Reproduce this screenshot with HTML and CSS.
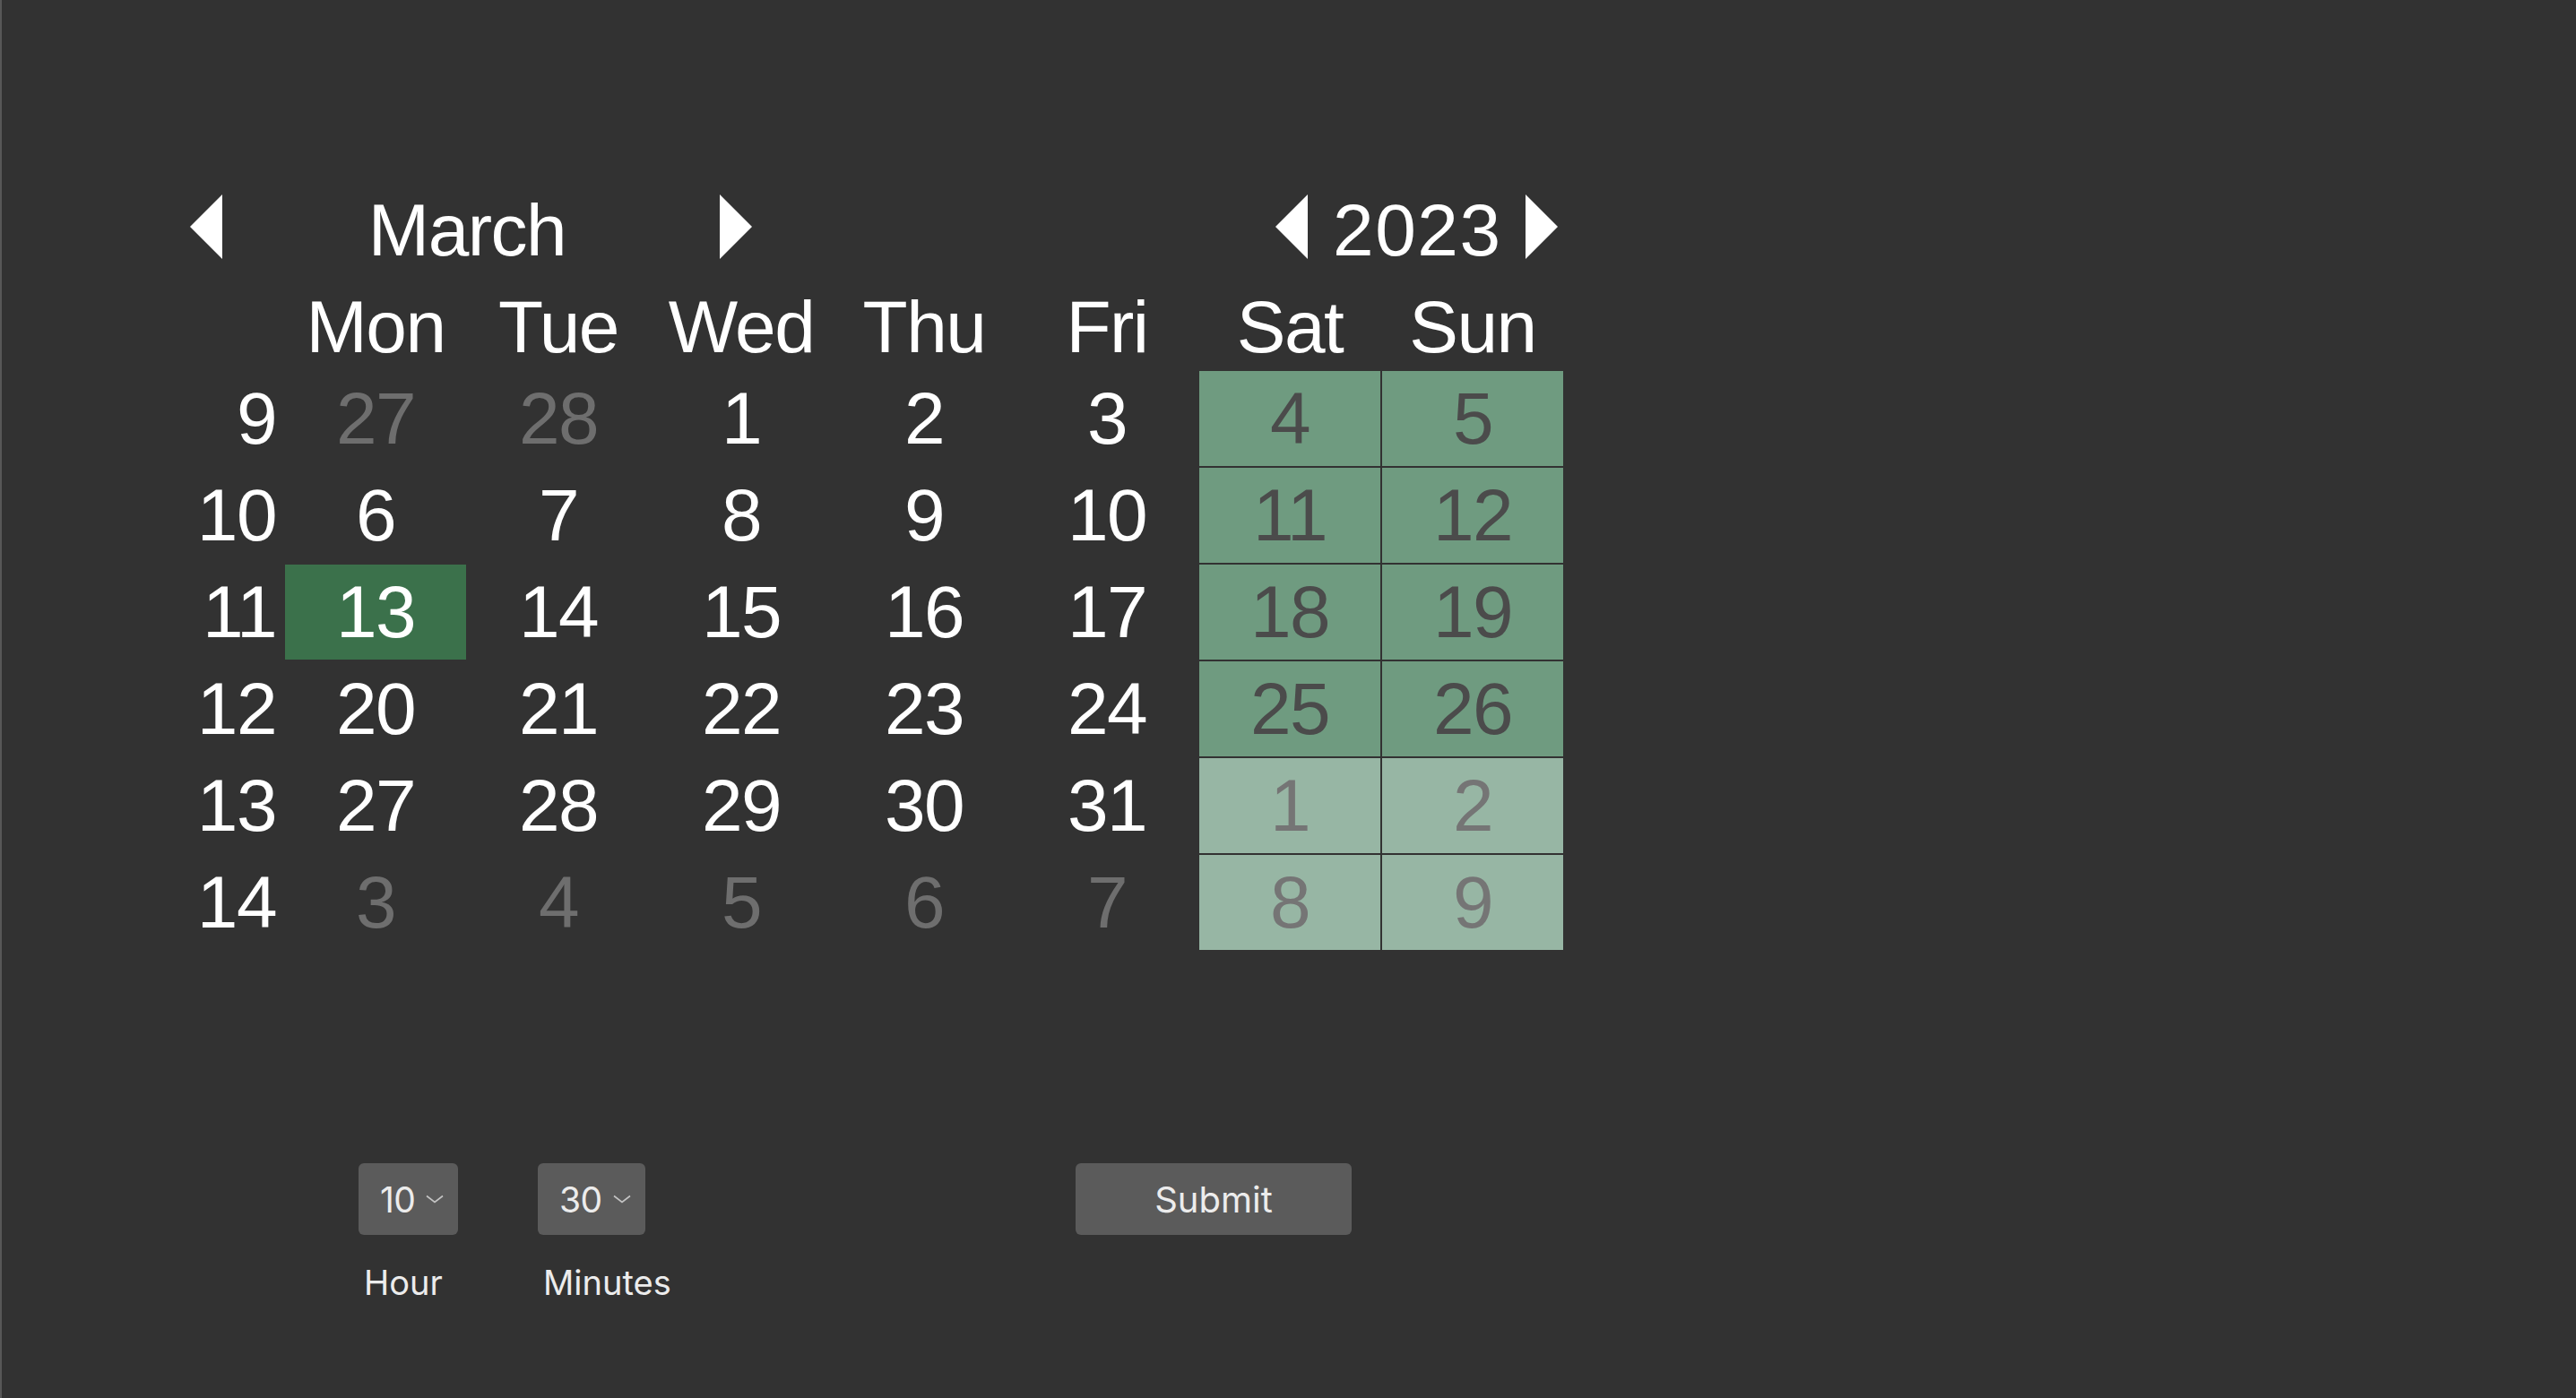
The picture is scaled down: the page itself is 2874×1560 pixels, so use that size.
FILE: index.html
```html
<!DOCTYPE html>
<html lang="en">
<head>
<meta charset="utf-8">
<title>Calendar</title>
<link rel="stylesheet" href="styles.css">
</head>
<body>
<div class="app">
  <div class="calendar">
    <div class="nav nav-prev"><svg width="36" height="72" viewBox="0 0 36 72"><polygon points="36,0 36,72 0,36" fill="#fff"/></svg></div>
    <div class="month">March</div>
    <div class="nav nav-next"><svg width="36" height="72" viewBox="0 0 36 72"><polygon points="0,0 0,72 36,36" fill="#fff"/></svg></div>
    <div class="year-nav">
      <svg width="36" height="72" viewBox="0 0 36 72"><polygon points="36,0 36,72 0,36" fill="#fff"/></svg>
      <span class="year">2023</span>
      <svg width="36" height="72" viewBox="0 0 36 72"><polygon points="0,0 0,72 36,36" fill="#fff"/></svg>
    </div>

    <div class="cell corner"></div>
    <div class="cell dow">Mon</div>
    <div class="cell dow">Tue</div>
    <div class="cell dow">Wed</div>
    <div class="cell dow">Thu</div>
    <div class="cell dow">Fri</div>
    <div class="cell dow">Sat</div>
    <div class="cell dow">Sun</div>

    <div class="cell week">9</div>
    <div class="cell muted">27</div>
    <div class="cell muted">28</div>
    <div class="cell">1</div>
    <div class="cell">2</div>
    <div class="cell">3</div>
    <div class="cell weekend">4</div>
    <div class="cell weekend">5</div>

    <div class="cell week">10</div>
    <div class="cell">6</div>
    <div class="cell">7</div>
    <div class="cell">8</div>
    <div class="cell">9</div>
    <div class="cell">10</div>
    <div class="cell weekend">11</div>
    <div class="cell weekend">12</div>

    <div class="cell week">11</div>
    <div class="cell today">13</div>
    <div class="cell">14</div>
    <div class="cell">15</div>
    <div class="cell">16</div>
    <div class="cell">17</div>
    <div class="cell weekend">18</div>
    <div class="cell weekend">19</div>

    <div class="cell week">12</div>
    <div class="cell">20</div>
    <div class="cell">21</div>
    <div class="cell">22</div>
    <div class="cell">23</div>
    <div class="cell">24</div>
    <div class="cell weekend">25</div>
    <div class="cell weekend">26</div>

    <div class="cell week">13</div>
    <div class="cell">27</div>
    <div class="cell">28</div>
    <div class="cell">29</div>
    <div class="cell">30</div>
    <div class="cell">31</div>
    <div class="cell weekend next">1</div>
    <div class="cell weekend next">2</div>

    <div class="cell week">14</div>
    <div class="cell muted">3</div>
    <div class="cell muted">4</div>
    <div class="cell muted">5</div>
    <div class="cell muted">6</div>
    <div class="cell muted">7</div>
    <div class="cell weekend next">8</div>
    <div class="cell weekend next">9</div>
  </div>

  <div class="controls">
    <div class="field">
      <div class="select"><span>10</span><svg width="20" height="10" viewBox="0 0 20 10"><polyline points="1,1.5 10,8.5 19,1.5" fill="none" stroke="#c4c4c4" stroke-width="1.6"/></svg></div>
      <div class="label">Hour</div>
    </div>
    <div class="field">
      <div class="select"><span>30</span><svg width="20" height="10" viewBox="0 0 20 10"><polyline points="1,1.5 10,8.5 19,1.5" fill="none" stroke="#c4c4c4" stroke-width="1.6"/></svg></div>
      <div class="label">Minutes</div>
    </div>
    <div class="field">
      <button class="submit" type="button">Submit</button>
    </div>
  </div>
</div>
</body>
</html>
```

FILE: styles.css
```css
html, body {
  margin: 0;
  padding: 0;
  background: #323232;
}

.app {
  box-sizing: border-box;
  min-height: 100vh;
  border-left: 2px solid #575757;
  padding: 197px 0 0 112px;
  font-family: "Liberation Sans", Arial, Helvetica, sans-serif;
  color: #ffffff;
}

.calendar {
  display: grid;
  grid-template-columns: repeat(8, 202px);
  grid-template-rows: 119px 94px repeat(6, 106px);
  column-gap: 2px;
  row-gap: 2px;
  width: max-content;
  font-size: 82px;
  letter-spacing: -1.5px;
}

.nav {
  display: flex;
  align-self: center;
  margin-bottom: 7px;
}

.nav svg, .year-nav svg {
  display: block;
}

.nav-prev {
  grid-column: 1;
  justify-self: end;
  margin-right: 68px;
}

.month {
  grid-column: 2 / span 2;
  display: flex;
  align-items: center;
  justify-content: center;
}

.nav-next {
  grid-column: 4;
  justify-self: start;
  margin-left: 77px;
}

.year-nav {
  grid-column: 7 / span 2;
  justify-self: end;
  margin-right: 6px;
  display: flex;
  align-items: center;
  gap: 28px;
}

.year {
  letter-spacing: 1.5px;
  margin-right: -1.5px;
}

.year-nav svg {
  margin-bottom: 7px;
}

.cell {
  display: flex;
  align-items: center;
  justify-content: center;
}

.week {
  justify-content: flex-end;
  padding-right: 8px;
}

.muted {
  color: #6e6e6e;
}

.today {
  background: #3b714b;
}

.weekend {
  background: #6f9b80;
  color: #4b4b4b;
}

.weekend.next {
  background: #97b6a4;
  color: #757575;
}

.controls {
  display: grid;
  grid-template-columns: 200px 600px auto;
  margin: 238px 0 0 286px;
  font-family: Inter, "Noto Sans", sans-serif;
  color: #ececec;
}

.field {
  display: flex;
  flex-direction: column;
  align-items: flex-start;
}

.select {
  box-sizing: border-box;
  height: 80px;
  display: flex;
  align-items: center;
  gap: 12px;
  padding: 0 16px 0 24px;
  background: #5b5b5b;
  border-radius: 6px;
  font-size: 39px;
  letter-spacing: -0.5px;
}

.label {
  margin-top: 30px;
  padding-left: 6px;
  font-size: 38px;
}

.submit {
  box-sizing: border-box;
  width: 308px;
  height: 80px;
  border: none;
  border-radius: 6px;
  background: #5b5b5b;
  color: #ececec;
  font-family: Inter, "Noto Sans", sans-serif;
  font-size: 40px;
  padding: 0;
}
```
